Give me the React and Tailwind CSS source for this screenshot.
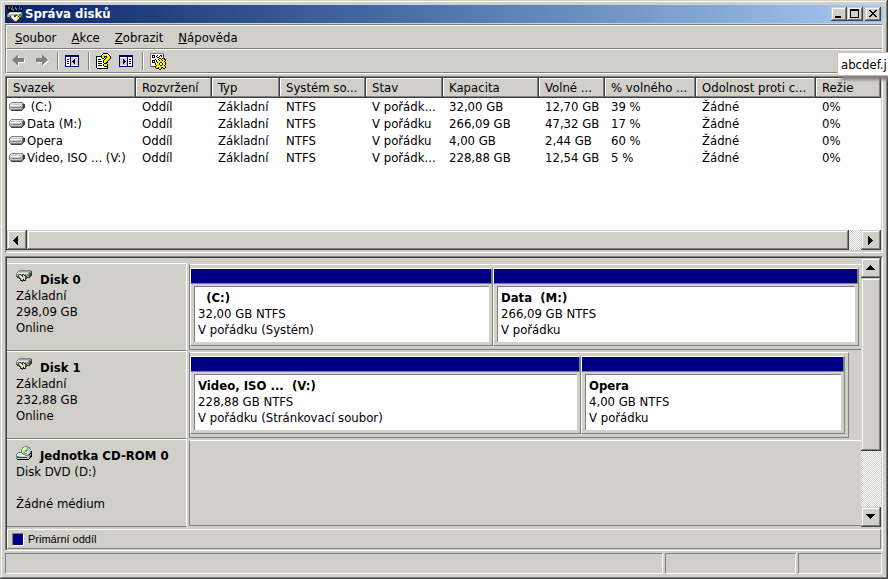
const MENU = ['Soubor', 'Akce', 'Zobrazit', 'Nápověda']

const COLUMNS = [
  { title: 'Svazek', width: 'w-[129px]' },
  { title: 'Rozvržení', width: 'w-[76px]' },
  { title: 'Typ', width: 'w-[68px]' },
  { title: 'Systém so...', width: 'w-[86px]' },
  { title: 'Stav', width: 'w-[77px]' },
  { title: 'Kapacita', width: 'w-[96px]' },
  { title: 'Volné ...', width: 'w-[66px]' },
  { title: '% volného ...', width: 'w-[91px]' },
  { title: 'Odolnost proti c...', width: 'w-[120px]' },
  { title: 'Režie', width: '' },
]

const VOLUMES = [
  [' (C:)', 'Oddíl', 'Základní', 'NTFS', 'V pořádk...', '32,00 GB', '12,70 GB', '39 %', 'Žádné', '0%'],
  ['Data (M:)', 'Oddíl', 'Základní', 'NTFS', 'V pořádku', '266,09 GB', '47,32 GB', '17 %', 'Žádné', '0%'],
  ['Opera', 'Oddíl', 'Základní', 'NTFS', 'V pořádku', '4,00 GB', '2,44 GB', '60 %', 'Žádné', '0%'],
  ['Video, ISO ... (V:)', 'Oddíl', 'Základní', 'NTFS', 'V pořádk...', '228,88 GB', '12,54 GB', '5 %', 'Žádné', '0%'],
]

// share = relative width of the partition in the bar
const DISKS = [
  {
    name: 'Disk 0',
    lines: ['Základní', '298,09 GB', 'Online'],
    frame: 'pr-[2px]',
    partitions: [
      { name: '  (C:)', size: '32,00 GB NTFS', status: 'V pořádku (Systém)', share: 303 },
      { name: 'Data  (M:)', size: '266,09 GB NTFS', status: 'V pořádku', share: 366 },
    ],
  },
  {
    name: 'Disk 1',
    lines: ['Základní', '232,88 GB', 'Online'],
    frame: 'mr-3 border-r border-r-[#808080] pr-[3px]',
    partitions: [
      { name: 'Video, ISO ...  (V:)', size: '228,88 GB NTFS', status: 'V pořádku (Stránkovací soubor)', share: 391 },
      { name: 'Opera', size: '4,00 GB NTFS', status: 'V pořádku', share: 264 },
    ],
  },
  {
    name: 'Jednotka CD-ROM 0',
    lines: ['Disk DVD (D:)', '\u00a0', 'Žádné médium'],
    frame: '',
    cd: true,
    partitions: [],
  },
]

const RAISED =
  'bg-[#d0d0c8] shadow-[inset_-1px_-1px_#404040,inset_1px_1px_#d0d0c8,inset_-2px_-2px_#808080,inset_2px_2px_#fff]'
const DITHER = 'bg-[repeating-conic-gradient(#d0d0c8_0_25%,#fff_0_50%)] bg-[length:2px_2px]'

// pixel icons: one character per pixel, '.' is transparent
const PALETTE = {
  k: '#000000',
  d: '#404040',
  g: '#808080',
  m: '#a0a0a0',
  l: '#c8c8c8',
  e: '#e4e4e4',
  w: '#ffffff',
  y: '#f8f000',
  n: '#00d000',
  c: '#40d8e8',
  b: '#2040e0',
  r: '#e02020',
  t: '#00a0a0',
}

const ICONS = {
  volume: [
    '..gggggggggggg..',
    '.geeeeeeeeeellg.',
    'gelllllllllllgdd',
    'gwwwwwwwwwwwegdd',
    'gllllllllllnlgdd',
    'gmmggggggggmmgdd',
    'glllllllllllmgd.',
    '.ggggggggggggd..',
    '..ddddddddddd...',
  ],
  disk: [
    '...gggggggggggg.',
    '..gmmmmmmmmmmmgd',
    '.gllllllllllmggd',
    'geeeeeeeeeeemgdd',
    'gmmddmddmmmnnddd',
    'gmdllddlddmmgddd',
    'dgdlwwdlwddmgdd.',
    '.dddlwwlyddddd..',
    '...ddlwlydd.....',
    '....dllkyd......',
    '....dkdkkd......',
    '......d.........',
  ],
  cd: [
    '........gggg....',
    '......ggwyycgg..',
    '......gwwyyccg..',
    '.....gewwyccleg.',
    '.....gyyyggclle.',
    '.....gyywggwelgk',
    '..gggglcnwweelgk',
    '.geeeegccnnwegkk',
    'geeeeeegglllgkgk',
    'gwwwwwwwwggggggk',
    'gnnllllllllllgkk',
    'gddddddddddlmgk.',
    'gllllllllllllk..',
    '.kkkkkkkkkkkk...',
  ],
  app: [
    'k..kkgkk..kkbk..',
    'krr.kbk.tk.kbk.k',
    'krrkgbk.ttkbb.gk',
    '.kkkgbnk.tkkb.gk',
    '.kkkkbnkk.kbkkk.',
    '..kkkkkkkkkkkkk.',
    '..glllllllllllgd',
    '.gwwwwwwwwwwwlgd',
    'gllmmmmmmmllnngd',
    'gmmmllldddmmnngd',
    'gmmdlwwddwydmmdd',
    'ddddlwweewyydddd',
    '...ddlwwewyyd...',
    '....ddllwyyd....',
    '.....ddlwyd.....',
    '.......ddd......',
  ],
  help: [
    '.......kkkkk....',
    '......kyyyyyk...',
    '.....kyyyyyyyk..',
    'kkkkkkyykkkyyyk.',
    'kwwwwkyyk.kyyyk.',
    'kwwwwwkkwkyyyyk.',
    'kwkkkwwwkyyyyk..',
    'kwwwwwwkyyyyk...',
    'kwkkkkwkyyyk....',
    'kwwwwwwkyykk....',
    'kwkkkkwwkkk.....',
    'kwwwwwwkyyyk....',
    'kwkkkkwkyyyk....',
    'kwwwwwwwkkkk....',
    'kwwwwwwwwwwk....',
    '.kkkkkkkkkkk....',
  ],
  settings: [
    'gggggggggggggg..',
    'gwwwwwwwwwwwwd..',
    'gwkkkwwkwwkkwd..',
    'gwkwkwkwwkwkwd..',
    'gwkkkwwkkwwwwd..',
    'gwwwwwwwwkkwkdk.',
    'gwwwwkwwkyykyykk',
    'gwkkkwkyykyykyyk',
    'gwkwkwkyyyyyyyk.',
    'gwkkkwwkyykkyyyk',
    'gwwwwkyyykwwkyyk',
    'gwwwwkyyykwwkyyk',
    'gwwwwwkyyykkyyk.',
    'gddddkyyyyyyyyyk',
    '.....kyykyykkyyk',
    '......kkkyyk.kk.',
    '.........kk.....',
  ],
}

function PixelIcon({ name }) {
  const rows = ICONS[name]
  return (
    <svg
      className="shrink-0"
      width="16"
      height={rows.length}
      viewBox={`0 0 16 ${rows.length}`}
      shapeRendering="crispEdges"
    >
      {rows.map((row, y) =>
        [...row].map((ch, x) =>
          ch === '.' ? null : <rect key={`${x}-${y}`} x={x} y={y} width="1" height="1" fill={PALETTE[ch]} />,
        ),
      )}
    </svg>
  )
}

function Triangle({ dir }) {
  const points = {
    left: '9,4 9,13 4,8.5',
    right: '5,4 5,13 10,8.5',
    up: '3,10 12,10 7.5,5',
    down: '3,5 12,5 7.5,10',
  }
  return (
    <svg width="16" height="16" viewBox="0 0 16 16" shapeRendering="crispEdges">
      <polygon points={points[dir]} fill="#000" />
    </svg>
  )
}

function ScrollButton({ dir, label }) {
  return (
    <button aria-label={label} className={`flex h-5 w-5 shrink-0 items-center justify-center ${RAISED}`}>
      <Triangle dir={dir} />
    </button>
  )
}

function Arrow({ right }) {
  const d = right ? 'M14 6L8 0.5V4H2v4h6v3.5z' : 'M1 6l6-5.5V4h6v4H7v3.5z'
  return (
    <svg width="16" height="14" viewBox="0 0 16 14">
      <path d={d} fill="#fff" transform="translate(1 1)" />
      <path d={d} fill="#808080" />
    </svg>
  )
}

function PaneIcon({ right }) {
  return (
    <svg width="15" height="13" viewBox="0 0 15 13" shapeRendering="crispEdges">
      <path d="M0 0h14v12H0z" fill="#000080" />
      <path d="M1 2h12v9H1z" fill="#fff" />
      {right ? (
        <>
          <path d="M8 2h1v9H8z" fill="#000080" />
          <path d="M10 4h2v1h-2zM10 6h2v1h-2zM10 8h2v1h-2z" fill="#000" />
          <path d="M1 3h7v7H1z" fill="#d0d0c8" />
          <path d="M4 4h1v1h1v1h1v1H6v1H5v1H4z" fill="#000" />
        </>
      ) : (
        <>
          <path d="M5 2h1v9H5z" fill="#000080" />
          <path d="M2 4h2v1H2zM2 6h2v1H2zM2 8h2v1H2z" fill="#000" />
          <path d="M6 3h7v7H6z" fill="#d0d0c8" />
          <path d="M10 4v5H9V8H8V7H7V6h1V5h1V4z" fill="#000" />
        </>
      )}
    </svg>
  )
}

function ToolButton({ label, children }) {
  return (
    <button aria-label={label} className="flex h-5 w-[23px] items-center justify-center">
      {children}
    </button>
  )
}

function Divider() {
  return <div className="mr-[2px] ml-1 h-[18px] w-[2px] border-l border-[#808080] bg-white" />
}

function TitleBar() {
  return (
    <div className="flex h-[18px] items-center gap-[2px] bg-linear-to-r from-[#0a246a] to-[#a6caf0] pr-[2px] pl-[2px]">
      <PixelIcon name="app" />
      <h1 className="flex-1 leading-4 font-bold text-white">Správa disků</h1>
      <div className="flex">
        <button aria-label="Minimalizovat" className={`h-[14px] w-4 ${RAISED}`}>
          <svg width="16" height="14" viewBox="0 0 16 14" shapeRendering="crispEdges">
            <path d="M4 9h6v2H4z" />
          </svg>
        </button>
        <button aria-label="Maximalizovat" className={`h-[14px] w-4 ${RAISED}`}>
          <svg width="16" height="14" viewBox="0 0 16 14" shapeRendering="crispEdges">
            <path d="M3 2h9v9H3zM4 4v6h7V4z" fillRule="evenodd" />
          </svg>
        </button>
        <button aria-label="Zavřít" className={`ml-[2px] h-[14px] w-4 ${RAISED}`}>
          <svg width="16" height="14" viewBox="0 0 16 14" shapeRendering="crispEdges">
            <path d="M4 3h2v1h1v1h2V4h1V3h2v1h-1v1h-1v1H9v1h1v1h1v1h1v1h-2V9H9V8H7v1H6v1H4V9h1V8h1V7h1V6H6V5H5V4H4z" />
          </svg>
        </button>
      </div>
    </div>
  )
}

function VolumeTable() {
  return (
    <table className="w-full table-fixed border-collapse text-left">
      <thead>
        <tr className="h-5">
          {COLUMNS.map((col) => (
            <th
              key={col.title}
              className={`${col.width} overflow-hidden bg-[#d0d0c8] p-0 pl-[6px] font-normal whitespace-nowrap shadow-[inset_-1px_-1px_#404040,inset_-2px_-2px_#808080,inset_1px_1px_#fff]`}
            >
              {col.title}
            </th>
          ))}
        </tr>
      </thead>
      <tbody>
        {VOLUMES.map((row) => (
          <tr key={row[0]} className="h-[17px]">
            {row.map((cell, i) =>
              i === 0 ? (
                <td key={i} className="p-0 pl-[2px]">
                  <div className="flex items-center gap-[2px] whitespace-pre">
                    <PixelIcon name="volume" />
                    {cell}
                  </div>
                </td>
              ) : (
                <td key={i} className="overflow-hidden p-0 pl-[6px] whitespace-nowrap">
                  {cell}
                </td>
              ),
            )}
          </tr>
        ))}
      </tbody>
    </table>
  )
}

function Partition({ part }) {
  return (
    <div className="flex min-w-0 basis-0 flex-col" style={{ flexGrow: part.share }}>
      <div className="h-4 border-t border-r-2 border-b border-l border-[#808080] border-t-white border-l-white bg-[#000084]" />
      <div className="flex flex-1 flex-col border-r border-b border-l border-[#808080] border-l-white px-[3px] pt-[2px] pb-[3px]">
        <div className="flex-1 overflow-hidden border-t border-l border-[#808080] bg-white pt-[3px] pl-[3px] leading-4 whitespace-pre">
          <p className="font-bold">{part.name}</p>
          <p>{part.size}</p>
          <p>{part.status}</p>
        </div>
      </div>
    </div>
  )
}

function DiskRow({ disk }) {
  return (
    <div className="flex h-22">
      <div className="w-[180px] shrink-0 border-t border-r border-b border-white border-b-[#808080] pt-2 pl-[9px] leading-4">
        <div className="flex gap-2">
          <div className="-mt-[2px]">
            <PixelIcon name={disk.cd ? 'cd' : 'disk'} />
          </div>
          <p className="font-bold whitespace-nowrap">{disk.name}</p>
        </div>
        {disk.lines.map((line) => (
          <p key={line}>{line}</p>
        ))}
      </div>
      <div
        className={`my-px ml-[2px] flex flex-1 border-t border-b border-l border-t-white border-b-[#808080] border-l-[#808080] py-[3px] ${disk.frame}`}
      >
        {disk.partitions.map((part) => (
          <Partition key={part.name} part={part} />
        ))}
      </div>
    </div>
  )
}

export default function App() {
  return (
    <div className="relative flex min-h-screen w-full flex-col overflow-hidden bg-[#d0d0c8] p-[5px] font-['DejaVu_Sans_Condensed','DejaVu_Sans',sans-serif] text-[13px] leading-4 text-black shadow-[inset_-1px_-1px_#404040,inset_1px_1px_#d0d0c8,inset_-2px_-2px_#808080,inset_2px_2px_#fff]">
      <TitleBar />

      <div className="mt-px mb-[2px] border-t border-r border-b border-l border-white border-t-[#808080] border-l-[#808080]">
        <nav className="flex h-6 items-center gap-[15px] border-t border-b border-l border-white border-b-[#808080] pt-px pl-2">
          {MENU.map((item) => (
            <button key={item}>
              <span className="underline">{item[0]}</span>
              {item.slice(1)}
            </button>
          ))}
        </nav>
        <div className="flex h-6 items-center border-t border-b border-l border-white border-b-[#808080]">
          <ToolButton label="Zpět">
            <Arrow />
          </ToolButton>
          <ToolButton label="Vpřed">
            <Arrow right />
          </ToolButton>
          <Divider />
          <ToolButton label="Strom konzoly">
            <PaneIcon />
          </ToolButton>
          <Divider />
          <ToolButton label="Nápověda">
            <PixelIcon name="help" />
          </ToolButton>
          <ToolButton label="Podokno akcí">
            <PaneIcon right />
          </ToolButton>
          <Divider />
          <ToolButton label="Nastavení">
            <PixelIcon name="settings" />
          </ToolButton>
        </div>
      </div>

      <div className="flex flex-1 flex-col border border-white border-t-[#808080] border-l-[#808080] pb-px">
        <div className="flex flex-1 flex-col border border-[#d0d0c8] border-t-[#404040] border-l-[#404040]">
          <div className="flex-1 bg-white">
            <VolumeTable />
          </div>
          <div className="flex">
            <ScrollButton dir="left" label="Posunout vlevo" />
            <div className={`h-5 flex-1 ${RAISED}`} />
            <div className={`w-3 ${DITHER}`} />
            <ScrollButton dir="right" label="Posunout vpravo" />
          </div>
        </div>
      </div>

      <div className="mt-[3px] border border-white border-t-[#808080] border-l-[#808080]">
        <div className="border border-[#d0d0c8] border-t-[#404040] border-l-[#404040]">
          <div className="flex">
            <div className="flex-1 pt-[5px]">
              {DISKS.map((disk) => (
                <DiskRow key={disk.name} disk={disk} />
              ))}
            </div>
            <div className="flex w-5 flex-col">
              <ScrollButton dir="up" label="Posunout nahoru" />
              <div className={`h-[173px] ${RAISED}`} />
              <div className={`flex-1 ${DITHER}`} />
              <ScrollButton dir="down" label="Posunout dolů" />
            </div>
          </div>
          <div className="mt-[2px] flex h-5 items-center gap-1 border border-white border-r-[#808080] border-b-[#808080] pl-1 font-['Liberation_Sans',sans-serif] text-[11px]">
            <span className="h-[13px] w-3 border border-[#808080] border-r-white border-b-white bg-[#000084]" />
            Primární oddíl
          </div>
        </div>
      </div>

      <div className="mt-[2px] flex h-[21px] gap-[2px] pr-px">
        <div className="flex-1 border border-white border-t-[#808080] border-l-[#808080]" />
        <div className="w-[131px] border border-white border-t-[#808080] border-l-[#808080]" />
        <div className="w-[84px] border border-white border-t-[#808080] border-l-[#808080]" />
      </div>

      {/* dragged file hint, runs off the right edge */}
      <div className="absolute top-[52px] right-0 h-6 w-[51px] overflow-hidden border border-r-0 border-[#c8bcb4] bg-white pt-1 pl-[3px] whitespace-nowrap shadow-[4px_4px_3px_#808080]">
        abcdef.j
      </div>
    </div>
  )
}
